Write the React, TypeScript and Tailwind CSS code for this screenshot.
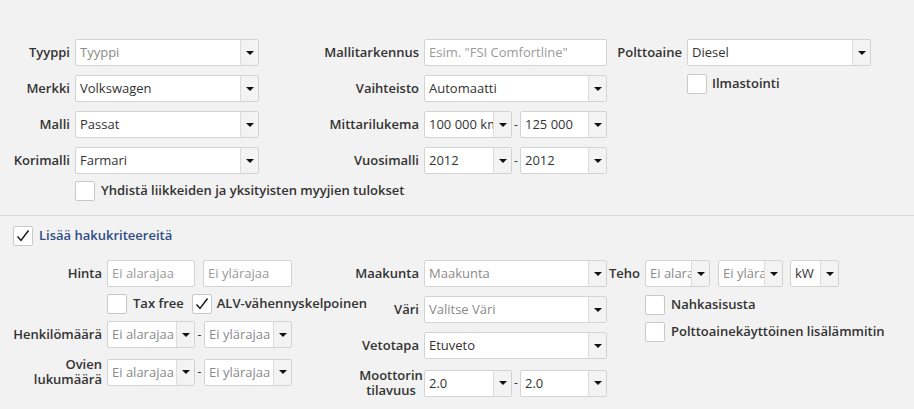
import React from "react";

function Arrow() {
  return (
    <span className="h-0 w-0 border-x-[4px] border-t-[4px] border-x-transparent border-t-[#111]" />
  );
}

function Select({
  value,
  placeholder = false,
  className = "",
}: {
  value: string;
  placeholder?: boolean;
  className?: string;
}) {
  return (
    <div
      className={`flex h-[27px] rounded-[2px] border border-[#d3d3d3] bg-white ${className}`}
    >
      <div
        className={`flex-1 overflow-hidden whitespace-nowrap px-[4px] text-[13px] leading-[25px] ${
          placeholder ? "text-[#8a8a8a]" : "text-[#333]"
        }`}
      >
        {value}
      </div>
      <div className="flex w-[18px] shrink-0 items-center justify-center border-l border-[#dcdcdc] bg-[#f3f3f3]">
        <Arrow />
      </div>
    </div>
  );
}

function TextInput({ placeholder, className = "" }: { placeholder: string; className?: string }) {
  return (
    <div
      className={`h-[27px] overflow-hidden whitespace-nowrap rounded-[2px] border border-[#d3d3d3] bg-white px-[4px] text-[13px] leading-[25px] text-[#9a9a9a] ${className}`}
    >
      {placeholder}
    </div>
  );
}

function Check({ checked = false }: { checked?: boolean }) {
  return (
    <span className="flex h-[20px] w-[20px] shrink-0 items-center justify-center rounded-[2px] border border-[#c8c8c8] bg-white">
      {checked && (
        <svg width="16" height="16" viewBox="0 0 16 16">
          <path d="M2.5 8.5 L6 12.5 L13.5 2.5" fill="none" stroke="#111" strokeWidth="1.4" />
        </svg>
      )}
    </span>
  );
}

function Label({ children, className = "" }: { children: React.ReactNode; className?: string }) {
  return (
    <div className={`shrink-0 pr-[5px] text-right text-[13px] font-semibold text-[#333] ${className}`}>
      {children}
    </div>
  );
}

function Range({ a, b, aPh = false, bPh = false }: { a: string; b: string; aPh?: boolean; bPh?: boolean }) {
  return (
    <div className="flex items-center">
      <Select value={a} placeholder={aPh} className="w-[88px]" />
      <span className="w-[8px] text-center text-[12px] text-[#333]">-</span>
      <Select value={b} placeholder={bPh} className="w-[87px]" />
    </div>
  );
}

export default function App() {
  return (
    <div
      className="h-[409px] w-[914px] overflow-hidden bg-[#f2f2f2] text-[#333]"
      style={{ fontFamily: '"Open Sans", "Noto Sans", sans-serif' }}
    >
      {/* basic criteria */}
      <div className="flex pt-[39px]">
        <div className="flex w-[259px] flex-col gap-[9px]">
          <div className="flex items-center">
            <Label className="w-[75px]">Tyyppi</Label>
            <Select value="Tyyppi" placeholder className="w-[184px]" />
          </div>
          <div className="flex items-center">
            <Label className="w-[75px]">Merkki</Label>
            <Select value="Volkswagen" className="w-[184px]" />
          </div>
          <div className="flex items-center">
            <Label className="w-[75px]">Malli</Label>
            <Select value="Passat" className="w-[184px]" />
          </div>
          <div className="flex items-center">
            <Label className="w-[75px]">Korimalli</Label>
            <Select value="Farmari" className="w-[184px]" />
          </div>
          <div className="-mt-[2px] flex items-center gap-[6px] pl-[75px]">
            <Check />
            <span className="whitespace-nowrap text-[13px] font-semibold">
              Yhdistä liikkeiden ja yksityisten myyjien tulokset
            </span>
          </div>
        </div>

        <div className="flex w-[348px] flex-col gap-[9px]">
          <div className="flex items-center">
            <Label className="w-[165px]">Mallitarkennus</Label>
            <TextInput placeholder={'Esim. "FSI Comfortline"'} className="w-[183px]" />
          </div>
          <div className="flex items-center">
            <Label className="w-[165px]">Vaihteisto</Label>
            <Select value="Automaatti" className="w-[183px]" />
          </div>
          <div className="flex items-center">
            <Label className="w-[165px]">Mittarilukema</Label>
            <Range a="100 000 km" b="125 000" />
          </div>
          <div className="flex items-center">
            <Label className="w-[165px]">Vuosimalli</Label>
            <Range a="2012" b="2012" />
          </div>
        </div>

        <div className="flex flex-col gap-[8px]">
          <div className="flex items-center">
            <Label className="w-[80px]">Polttoaine</Label>
            <Select value="Diesel" className="w-[184px]" />
          </div>
          <div className="flex items-center gap-[5px] pl-[80px]">
            <Check />
            <span className="text-[13px] font-semibold">Ilmastointi</span>
          </div>
        </div>
      </div>

      <div className="mt-[14px] border-t border-[#dcdcdc]" />

      <div className="flex items-center gap-[6px] pl-[13px] pt-[10px]">
        <Check checked />
        <span className="text-[13px] font-semibold text-[#2e4c86]">Lisää hakukriteereitä</span>
      </div>

      {/* extra criteria */}
      <div className="flex pt-[14px]">
        <div className="flex w-[292px] flex-col">
          <div className="flex items-center">
            <Label className="w-[107px]">Hinta</Label>
            <TextInput placeholder="Ei alarajaa" className="w-[88px]" />
            <TextInput placeholder="Ei ylärajaa" className="ml-[8px] w-[89px]" />
          </div>
          <div className="mt-[7px] flex items-center pl-[107px]">
            <Check />
            <span className="ml-[6px] whitespace-nowrap text-[13px] font-semibold">Tax free</span>
            <span className="ml-[8px]">
              <Check checked />
            </span>
            <span className="ml-[5px] whitespace-nowrap text-[13px] font-semibold">ALV-vähennyskelpoinen</span>
          </div>
          <div className="mt-[7px] flex items-center">
            <Label className="w-[107px]">Henkilömäärä</Label>
            <div className="flex items-center">
              <Select value="Ei alarajaa" placeholder className="w-[88px]" />
              <span className="w-[9px] text-center text-[12px]">-</span>
              <Select value="Ei ylärajaa" placeholder className="w-[88px]" />
            </div>
          </div>
          <div className="mt-[9px] flex items-center">
            <Label className="w-[107px] leading-[15px]">
              Ovien
              <br />
              lukumäärä
            </Label>
            <div className="flex items-center">
              <Select value="Ei alarajaa" placeholder className="w-[88px]" />
              <span className="w-[9px] text-center text-[12px]">-</span>
              <Select value="Ei ylärajaa" placeholder className="w-[88px]" />
            </div>
          </div>
        </div>

        <div className="flex w-[315px] flex-col gap-[9px]">
          <div className="flex items-center">
            <Label className="w-[132px]">Maakunta</Label>
            <Select value="Maakunta" placeholder className="w-[183px]" />
          </div>
          <div className="flex items-center">
            <Label className="w-[132px]">Väri</Label>
            <Select value="Valitse Väri" placeholder className="w-[183px]" />
          </div>
          <div className="flex items-center">
            <Label className="w-[132px]">Vetotapa</Label>
            <Select value="Etuveto" className="w-[183px]" />
          </div>
          <div className="flex items-center">
            <div className="w-[132px] shrink-0 whitespace-nowrap pl-[66px] text-center text-[13px] font-semibold leading-[15px]">
              Moottorin
              <br />
              tilavuus
            </div>
            <Range a="2.0" b="2.0" />
          </div>
        </div>

        <div className="flex flex-col">
          <div className="flex items-center">
            <Label className="w-[38px]">Teho</Label>
            <Select value="Ei alarajaa" placeholder className="w-[65px]" />
            <Select value="Ei ylärajaa" placeholder className="ml-[8px] w-[65px]" />
            <Select value="kW" className="ml-[7px] w-[49px]" />
          </div>
          <div className="mt-[8px] flex items-center gap-[6px] pl-[38px]">
            <Check />
            <span className="text-[13px] font-semibold">Nahkasisusta</span>
          </div>
          <div className="mt-[7px] flex items-center gap-[6px] pl-[38px]">
            <Check />
            <span className="whitespace-nowrap text-[13px] font-semibold">Polttoainekäyttöinen lisälämmitin</span>
          </div>
        </div>
      </div>
    </div>
  );
}
